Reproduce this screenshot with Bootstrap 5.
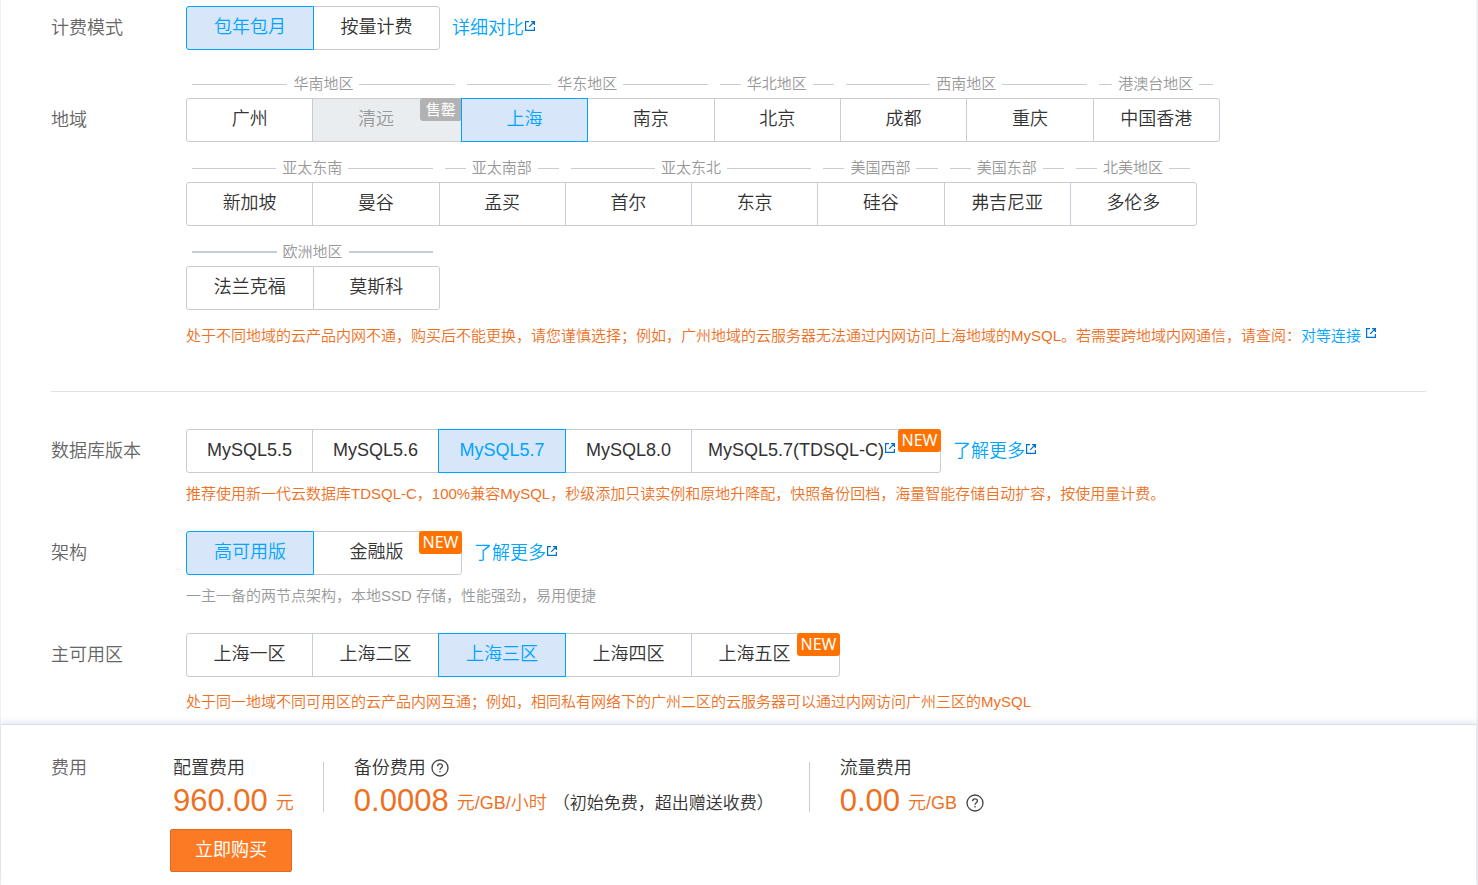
<!DOCTYPE html>
<html lang="zh-CN">
<head>
<meta charset="utf-8">
<meta name="viewport" content="width=device-width, initial-scale=1">
<title>云数据库 MySQL 购买</title>
<link rel="stylesheet" href="https://cdn.jsdelivr.net/npm/bootstrap@5.3.0/dist/css/bootstrap.min.css">
<style>
  body { background: #f0f0f7; color: #333; font: 350 18px/26px "Liberation Sans", "Noto Sans CJK SC", sans-serif; }
  .page { margin: 0 2px 0 1px; background: #fff; }
  .form-area { padding: 6px 50px 0; }
  .form-line { display: flex; }
  .form-line.billing { margin-bottom: 22px; }
  .form-name { flex: 0 0 135px; color: #666; line-height: 44px; }
  .form-name.under-region { padding-top: 26px; }
  .form-body { flex: 1 1 0; min-width: 0; }

  .opt { position: relative; width: 127px; height: 44px; padding: 0 0 2px; border: 1px solid #c8ccd8; border-radius: 0; background: #fff; color: #333; font-size: 18px; font-weight: 350; line-height: 40px; white-space: nowrap; }
  .opt + .opt { margin-left: -1px; }
  .opt:first-child { border-radius: 3px 0 0 3px; }
  .opt:last-child { border-radius: 0 3px 3px 0; }
  .opt.active, .opt.active:hover { z-index: 1; width: 128px; background: #d7e6f9; border-color: #00a4ff; color: #00a4ff; }
  .opt:disabled { background: #e9edf0; border-color: #c8ccd0; color: #999; opacity: 1; }
  .opt.with-flag { width: 149px; padding-right: 22px; }
  .opt.wide { width: 250px; padding-right: 28px; }
  .flag { position: absolute; top: -1px; right: -1px; width: 43px; height: 23px; border-radius: 3px; background: #ff7200; color: #fff; font: 16px/23px "Noto Sans", "Noto Sans CJK SC", sans-serif; text-align: center; }
  .flag.sold { background: #b2b2b2; width: 42px; font-size: 15px; }

  .regions { display: flex; max-width: 1011px; margin-bottom: 14px; }
  .regions.has-sold { max-width: 1034px; }
  .regions.short { max-width: 254px; margin-bottom: 13px; }
  .region { flex: 1 1 1px; }
  .region.double { flex: 2 2 1px; }
  .region.double.sold-in { flex-basis: 23px; }
  .region + .region { margin-left: -1px; }
  .region .opt { flex: 1 1 2px; width: auto; }
  .region .opt.with-flag { flex-basis: 24px; }
  .region:not(:first-child) .opt:first-child { border-top-left-radius: 0; border-bottom-left-radius: 0; }
  .region:not(:last-child) .opt:last-child { border-top-right-radius: 0; border-bottom-right-radius: 0; }
  .region-name { display: flex; align-items: center; gap: 6px; height: 26px; padding: 0 7px 2px 6px; color: #999; font-size: 15px; line-height: 24px; white-space: nowrap; }
  .region-name::before, .region-name::after { content: ""; flex: 1; height: 1px; background: #c8ccd8; }
  .regions.short .region-name::before, .regions.short .region-name::after { height: 2px; }

  .hint { margin: 0; color: #ed711f; font-size: 15px; line-height: 26px; }
  .hint.quiet { color: #999; }
  .doc-link { color: #00a4ff; text-decoration: none; white-space: nowrap; }
  .ext { width: 12px; height: 12px; fill: none; stroke: #0071ce; stroke-width: 1.2; vertical-align: 2px; }
  .rule { margin: 42px 0 37px; border: 0; border-top: 1px solid #e2e2e2; opacity: 1; }

  .fee-bar { padding: 30px 50px 13px; background: #fff; border-top: 1px solid #d5dfe6; box-shadow: 0 -2px 6px rgba(40, 80, 130, .14); z-index: 5; }
  .fee-title { flex: 0 0 122px; color: #666; }
  .fee { position: relative; padding-right: 29px; }
  .fee + .fee { padding-left: 30px; border-left: 1px solid #ccc; }
  .fee-slot { height: 50px; margin-top: 7px; }
  .fee-slot .fee { height: 50px; }
  .fee-text { margin-top: -7px; white-space: nowrap; }
  .amount { color: #ed711f; line-height: 40px; }
  .amount b { font-size: 31px; font-weight: 400; }
  .amount small { margin-left: 3px; font-size: 18px; vertical-align: 2px; }
  .amount .remark { margin: 0 6px; color: #333; font-size: 17px; vertical-align: 2px; }
  .ask { padding: 0; border: 0; background: none; line-height: 1; vertical-align: -3px; }
  .amount .ask { vertical-align: -1px; }
  .ask svg { display: block; width: 18px; height: 18px; fill: none; stroke: #444; stroke-width: 1.3; }
  .buy { width: 122px; height: 43px; margin: 17px 0 0 119px; padding: 0 0 2px; border: 1px solid #e06a1c; border-radius: 2px; background: #fc7a24; color: #fff; font-size: 18px; line-height: 38px; }
  .buy:hover { background: #ed711f; color: #fff; }
</style>
<script src="https://cdn.jsdelivr.net/npm/bootstrap@5.3.0/dist/js/bootstrap.bundle.min.js"></script>
</head>
<body>
<svg class="d-none" aria-hidden="true">
  <symbol id="ext" viewBox="0 0 12 12"><path d="M5 1.6H1.6v8.8h8.8V7M7 1.6h3.4V5M10 2 5.2 6.8"/></symbol>
  <symbol id="ask" viewBox="0 0 18 18"><circle cx="9" cy="9" r="8"/><path d="M6.6 7.2C6.6 5.6 7.6 4.8 9 4.8s2.4.8 2.4 2.1c0 1.7-2.4 1.9-2.4 3.9M9 12.1v1.5"/></symbol>
</svg>
<div class="page d-flex flex-column min-vh-100">
  <main class="form-area flex-grow-1">
    <section class="form-line billing">
      <div class="form-name">计费模式</div>
      <div class="form-body d-flex align-items-center">
        <div class="d-flex me-2" role="group" aria-label="计费模式">
          <button type="button" class="btn opt active">包年包月</button>
          <button type="button" class="btn opt">按量计费</button>
        </div>
        <a class="doc-link ms-1" href="#">详细对比<svg class="ext"><use href="#ext"/></svg></a>
      </div>
    </section>

    <section class="form-line">
      <div class="form-name under-region">地域</div>
      <div class="form-body">
        <div class="regions has-sold">
          <div class="region double sold-in">
            <div class="region-name">华南地区</div>
            <div class="d-flex">
              <button type="button" class="btn opt">广州</button>
              <button type="button" class="btn opt with-flag" disabled>清远<span class="flag sold">售罄</span></button>
            </div>
          </div>
          <div class="region double">
            <div class="region-name">华东地区</div>
            <div class="d-flex">
              <button type="button" class="btn opt active">上海</button>
              <button type="button" class="btn opt">南京</button>
            </div>
          </div>
          <div class="region">
            <div class="region-name">华北地区</div>
            <div class="d-flex"><button type="button" class="btn opt">北京</button></div>
          </div>
          <div class="region double">
            <div class="region-name">西南地区</div>
            <div class="d-flex">
              <button type="button" class="btn opt">成都</button>
              <button type="button" class="btn opt">重庆</button>
            </div>
          </div>
          <div class="region">
            <div class="region-name">港澳台地区</div>
            <div class="d-flex"><button type="button" class="btn opt">中国香港</button></div>
          </div>
        </div>

        <div class="regions">
          <div class="region double">
            <div class="region-name">亚太东南</div>
            <div class="d-flex">
              <button type="button" class="btn opt">新加坡</button>
              <button type="button" class="btn opt">曼谷</button>
            </div>
          </div>
          <div class="region">
            <div class="region-name">亚太南部</div>
            <div class="d-flex"><button type="button" class="btn opt">孟买</button></div>
          </div>
          <div class="region double">
            <div class="region-name">亚太东北</div>
            <div class="d-flex">
              <button type="button" class="btn opt">首尔</button>
              <button type="button" class="btn opt">东京</button>
            </div>
          </div>
          <div class="region">
            <div class="region-name">美国西部</div>
            <div class="d-flex"><button type="button" class="btn opt">硅谷</button></div>
          </div>
          <div class="region">
            <div class="region-name">美国东部</div>
            <div class="d-flex"><button type="button" class="btn opt">弗吉尼亚</button></div>
          </div>
          <div class="region">
            <div class="region-name">北美地区</div>
            <div class="d-flex"><button type="button" class="btn opt">多伦多</button></div>
          </div>
        </div>

        <div class="regions short">
          <div class="region double">
            <div class="region-name">欧洲地区</div>
            <div class="d-flex">
              <button type="button" class="btn opt">法兰克福</button>
              <button type="button" class="btn opt">莫斯科</button>
            </div>
          </div>
        </div>
        <p class="hint">处于不同地域的云产品内网不通，购买后不能更换，请您谨慎选择；例如，广州地域的云服务器无法通过内网访问上海地域的MySQL。若需要跨地域内网通信，请查阅：<a class="doc-link" href="#">对等连接<svg class="ext ms-1"><use href="#ext"/></svg></a></p>
      </div>
    </section>

    <hr class="rule">

    <section class="form-line">
      <div class="form-name">数据库版本</div>
      <div class="form-body">
        <div class="d-flex align-items-center mb-2">
          <div class="d-flex me-2" role="group" aria-label="数据库版本">
            <button type="button" class="btn opt">MySQL5.5</button>
            <button type="button" class="btn opt">MySQL5.6</button>
            <button type="button" class="btn opt active">MySQL5.7</button>
            <button type="button" class="btn opt">MySQL8.0</button>
            <button type="button" class="btn opt wide">MySQL5.7(TDSQL-C)<svg class="ext"><use href="#ext"/></svg><span class="flag">NEW</span></button>
          </div>
          <a class="doc-link ms-1" href="#">了解更多<svg class="ext"><use href="#ext"/></svg></a>
        </div>
        <p class="hint mb-4">推荐使用新一代云数据库TDSQL-C，100%兼容MySQL，秒级添加只读实例和原地升降配，快照备份回档，海量智能存储自动扩容，按使用量计费。</p>
      </div>
    </section>

    <section class="form-line">
      <div class="form-name">架构</div>
      <div class="form-body">
        <div class="d-flex align-items-center mb-2">
          <div class="d-flex me-2" role="group" aria-label="架构">
            <button type="button" class="btn opt active">高可用版</button>
            <button type="button" class="btn opt with-flag">金融版<span class="flag">NEW</span></button>
          </div>
          <a class="doc-link ms-1" href="#">了解更多<svg class="ext"><use href="#ext"/></svg></a>
        </div>
        <p class="hint quiet mb-4">一主一备的两节点架构，本地SSD 存储，性能强劲，易用便捷</p>
      </div>
    </section>

    <section class="form-line">
      <div class="form-name">主可用区</div>
      <div class="form-body">
        <div class="d-flex mb-2 pb-1" role="group" aria-label="主可用区">
          <button type="button" class="btn opt">上海一区</button>
          <button type="button" class="btn opt">上海二区</button>
          <button type="button" class="btn opt active">上海三区</button>
          <button type="button" class="btn opt">上海四区</button>
          <button type="button" class="btn opt with-flag">上海五区<span class="flag">NEW</span></button>
        </div>
        <p class="hint">处于同一地域不同可用区的云产品内网互通；例如，相同私有网络下的广州二区的云服务器可以通过内网访问广州三区的MySQL</p>
      </div>
    </section>
  </main>

  <footer class="fee-bar position-sticky bottom-0">
    <div class="d-flex">
      <div class="fee-title">费用</div>
      <div class="fee-slot d-flex">
        <div class="fee">
          <div class="fee-text">配置费用
            <div class="amount"><b>960.00</b> <small>元</small></div>
          </div>
        </div>
        <div class="fee">
          <div class="fee-text">备份费用 <button type="button" class="ask" aria-label="备份费用说明"><svg><use href="#ask"/></svg></button>
            <div class="amount"><b>0.0008</b> <small>元/GB/小时</small><span class="remark">（初始免费，超出赠送收费）</span></div>
          </div>
        </div>
        <div class="fee">
          <div class="fee-text">流量费用
            <div class="amount"><b>0.00</b> <small>元/GB</small> <button type="button" class="ask ms-1" aria-label="流量费用说明"><svg><use href="#ask"/></svg></button></div>
          </div>
        </div>
      </div>
    </div>
    <button type="button" class="btn buy">立即购买</button>
  </footer>
</div>
</body>
</html>
